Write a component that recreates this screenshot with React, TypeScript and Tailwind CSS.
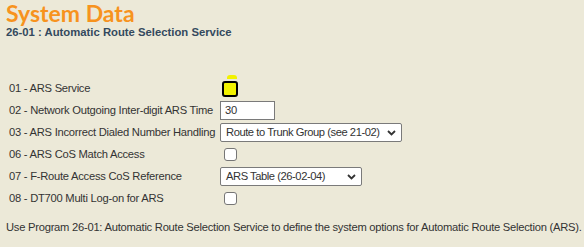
import React from 'react';

const font = { fontFamily: '"Liberation Sans", Arial, sans-serif' };

const Chevron: React.FC = () => (
  <svg width="9" height="6" viewBox="0 0 9 6" className="shrink-0">
    <path d="M1 1 L4.5 4.5 L8 1" fill="none" stroke="#333" strokeWidth="1.8" />
  </svg>
);

const Check: React.FC = () => (
  <div className="ml-[4px] h-[13px] w-[13px] rounded-[3px] border border-[#767676] bg-white" />
);

const Dropdown: React.FC<{ label: string; width: string }> = ({ label, width }) => (
  <div className={`flex h-[19px] items-center justify-between rounded-[2px] border border-[#7a7a7a] bg-white pl-[5px] pr-[5px] ${width}`}>
    <span className="whitespace-nowrap tracking-[-0.45px]">{label}</span>
    <Chevron />
  </div>
);

const rows: { label: string; control: React.ReactNode }[] = [
  {
    label: '01 - ARS Service',
    control: (
      <div className="relative ml-[2px] h-[16px] w-[16px] rounded-[3px] border-2 border-black bg-[#f2f200]">
        <div className="absolute -top-[8px] left-[3px] h-[4px] w-[10px] rounded-t-[3px] bg-[#f2f200]" />
      </div>
    ),
  },
  {
    label: '02 - Network Outgoing Inter-digit ARS Time',
    control: (
      <div className="flex h-[19px] w-[55px] items-center border border-[#7a7a7a] bg-white pl-[4px]">30</div>
    ),
  },
  {
    label: '03 - ARS Incorrect Dialed Number Handling',
    control: <Dropdown label="Route to Trunk Group (see 21-02)" width="w-[182px]" />,
  },
  { label: '06 - ARS CoS Match Access', control: <Check /> },
  {
    label: '07 - F-Route Access CoS Reference',
    control: <Dropdown label="ARS Table (26-02-04)" width="w-[142px]" />,
  },
  { label: '08 - DT700 Multi Log-on for ARS', control: <Check /> },
];

export default function App() {
  return (
    <div
      className="h-[247px] w-[584px] overflow-hidden bg-[#ece9d8] text-[11.2px] tracking-[-0.25px] text-[#333]"
      style={font}
    >
      <div className="px-[6px] pt-[1px] tracking-normal">
        <h1 className="text-[23px] font-bold leading-[24px] text-[#f7931e]" style={{ fontFamily: 'Lato, sans-serif' }}>
          System Data
        </h1>
        <h2 className="text-[11.3px] font-bold leading-[14px] text-[#34495e]">26-01 : Automatic Route Selection Service</h2>
      </div>
      <div className="mt-[40px] flex flex-col gap-[3px] pl-[9px]">
        {rows.map((r) => (
          <div key={r.label} className="flex h-[19px] items-center">
            <div className="w-[211px] shrink-0 whitespace-nowrap">{r.label}</div>
            {r.control}
          </div>
        ))}
      </div>
      <p className="mt-[11px] whitespace-nowrap px-[6px]">
        Use Program 26-01: Automatic Route Selection Service to define the system options for Automatic Route Selection (ARS).
      </p>
    </div>
  );
}
